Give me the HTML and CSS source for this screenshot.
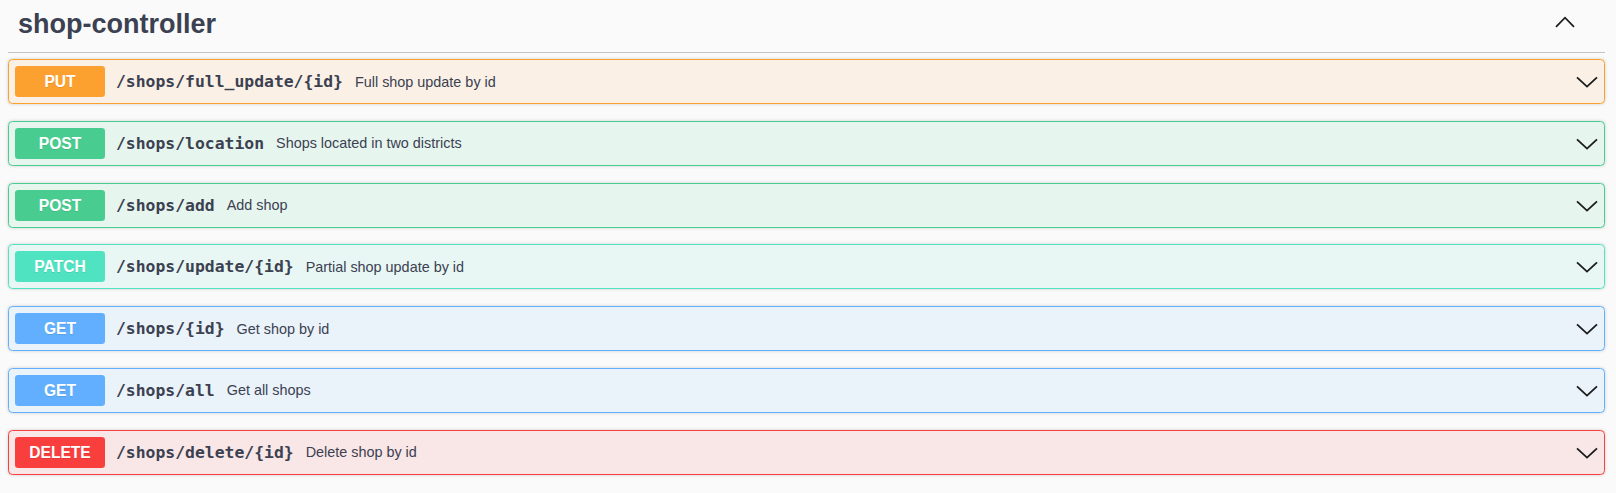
FILE: index.html
```html
<!DOCTYPE html>
<html lang="en">
<head>
<meta charset="utf-8">
<title>shop-controller</title>
<link rel="stylesheet" href="styles.css">
</head>
<body>
<div class="wrapper">
  <div class="tag-header">
    <h3 class="tag-title">shop-controller</h3>
    <svg class="tag-arrow" width="20" height="12" viewBox="0 0 20 12" aria-hidden="true">
      <polyline points="1,10.8 10,1.6 19,10.8" fill="none" stroke="#1b1b1b" stroke-width="1.7"/>
    </svg>
  </div>

  <div class="opblock put">
    <span class="method">PUT</span>
    <span class="path">/shops/full_update/{id}</span>
    <span class="desc">Full shop update by id</span>
    <svg class="arrow" width="22" height="12" viewBox="0 0 22 12" aria-hidden="true"><polyline points="1,1.3 11,10.6 21,1.3" fill="none" stroke="#1b1b1b" stroke-width="1.8"/></svg>
  </div>

  <div class="opblock post">
    <span class="method">POST</span>
    <span class="path">/shops/location</span>
    <span class="desc">Shops located in two districts</span>
    <svg class="arrow" width="22" height="12" viewBox="0 0 22 12" aria-hidden="true"><polyline points="1,1.3 11,10.6 21,1.3" fill="none" stroke="#1b1b1b" stroke-width="1.8"/></svg>
  </div>

  <div class="opblock post">
    <span class="method">POST</span>
    <span class="path">/shops/add</span>
    <span class="desc">Add shop</span>
    <svg class="arrow" width="22" height="12" viewBox="0 0 22 12" aria-hidden="true"><polyline points="1,1.3 11,10.6 21,1.3" fill="none" stroke="#1b1b1b" stroke-width="1.8"/></svg>
  </div>

  <div class="opblock patch">
    <span class="method">PATCH</span>
    <span class="path">/shops/update/{id}</span>
    <span class="desc">Partial shop update by id</span>
    <svg class="arrow" width="22" height="12" viewBox="0 0 22 12" aria-hidden="true"><polyline points="1,1.3 11,10.6 21,1.3" fill="none" stroke="#1b1b1b" stroke-width="1.8"/></svg>
  </div>

  <div class="opblock get">
    <span class="method">GET</span>
    <span class="path">/shops/{id}</span>
    <span class="desc">Get shop by id</span>
    <svg class="arrow" width="22" height="12" viewBox="0 0 22 12" aria-hidden="true"><polyline points="1,1.3 11,10.6 21,1.3" fill="none" stroke="#1b1b1b" stroke-width="1.8"/></svg>
  </div>

  <div class="opblock get">
    <span class="method">GET</span>
    <span class="path">/shops/all</span>
    <span class="desc">Get all shops</span>
    <svg class="arrow" width="22" height="12" viewBox="0 0 22 12" aria-hidden="true"><polyline points="1,1.3 11,10.6 21,1.3" fill="none" stroke="#1b1b1b" stroke-width="1.8"/></svg>
  </div>

  <div class="opblock delete">
    <span class="method">DELETE</span>
    <span class="path">/shops/delete/{id}</span>
    <span class="desc">Delete shop by id</span>
    <svg class="arrow" width="22" height="12" viewBox="0 0 22 12" aria-hidden="true"><polyline points="1,1.3 11,10.6 21,1.3" fill="none" stroke="#1b1b1b" stroke-width="1.8"/></svg>
  </div>
</div>
</body>
</html>
```

FILE: styles.css
```css
html, body {
  margin: 0;
  padding: 0;
  background: #fafafa;
}

body {
  font-family: "Liberation Sans", Arial, sans-serif;
  color: #3b4151;
}

.wrapper {
  width: 1597px;
  margin-left: 8px;
}

.tag-header {
  display: flex;
  justify-content: space-between;
  align-items: flex-start;
  height: 52px;
  border-bottom: 1px solid #c1c3c7;
  margin-bottom: 6px;
}

.tag-title {
  margin: 9px 0 0 10px;
  font-size: 27px;
  line-height: 30px;
  font-weight: 700;
  color: #3b4151;
}

.tag-arrow {
  display: block;
  margin-top: 16px;
  margin-right: 30px;
}

.opblock {
  display: flex;
  align-items: center;
  height: 43px;
  padding: 0 6px;
  border: 1px solid;
  border-radius: 4.4px;
  margin-bottom: 16.75px;
  box-shadow: 0 0 3.3px rgba(0, 0, 0, 0.19);
}

.method {
  flex: none;
  width: 90px;
  height: 31px;
  line-height: 31px;
  text-align: center;
  border-radius: 3.3px;
  color: #fff;
  font-family: "Liberation Sans", Arial, sans-serif;
  font-weight: 700;
  font-size: 15.6px;
  text-shadow: 0 1px 0 rgba(0, 0, 0, 0.1);
}

.path {
  padding-left: 11px;
  font-family: "DejaVu Sans Mono", "Liberation Mono", monospace;
  font-weight: 700;
  font-size: 16.4px;
  color: #3b4151;
}

.desc {
  flex: 1;
  padding-left: 12px;
  font-size: 14.4px;
  color: #3b4151;
}

.arrow {
  flex: none;
  display: block;
  margin-top: 1px;
}

.put { border-color: #fca130; background: rgba(252, 161, 48, 0.1); }
.put .method { background: #fca130; }

.post { border-color: #49cc90; background: rgba(73, 204, 144, 0.1); }
.post .method { background: #49cc90; }

.patch { border-color: #50e3c2; background: rgba(80, 227, 194, 0.1); }
.patch .method { background: #50e3c2; }

.get { border-color: #61affe; background: rgba(97, 175, 254, 0.1); }
.get .method { background: #61affe; }

.delete { border-color: #f93e3e; background: rgba(249, 62, 62, 0.1); }
.delete .method { background: #f93e3e; }
```
